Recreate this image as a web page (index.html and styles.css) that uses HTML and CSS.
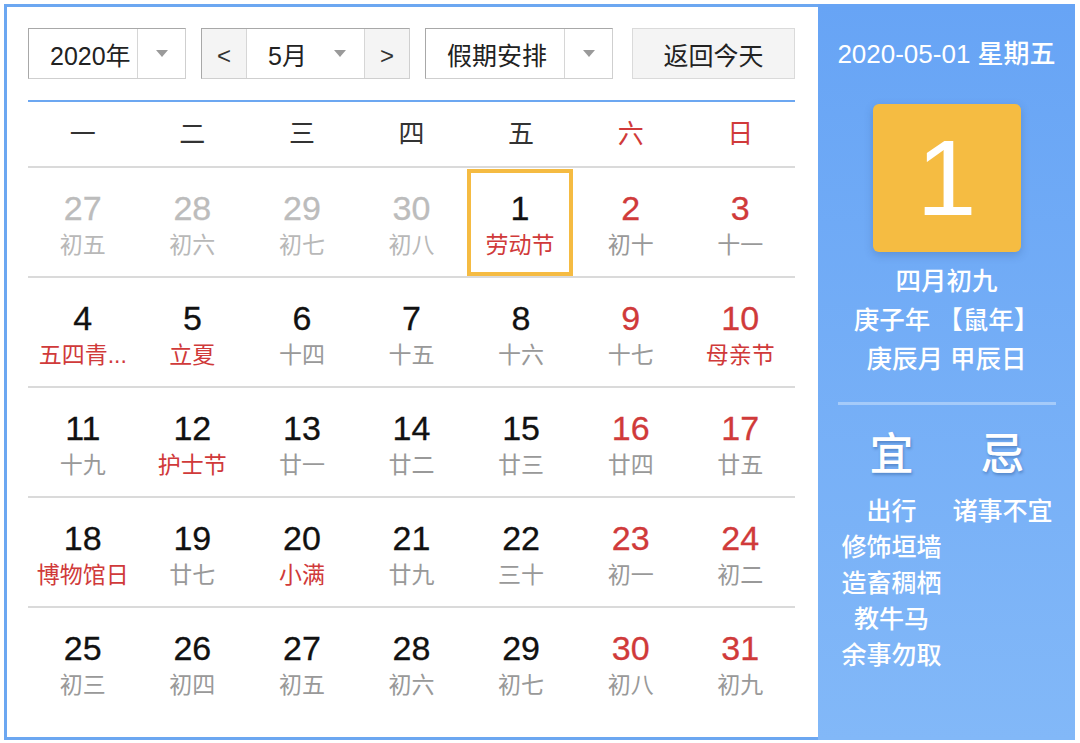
FILE: index.html
```html
<!DOCTYPE html>
<html lang="zh-CN">
<head>
<meta charset="utf-8">
<title>万年历</title>
<link rel="stylesheet" href="styles.css">
</head>
<body>
<div class="frame">
  <section class="cal">
    <div class="toolbar">
      <div class="select year"><span class="sel-text">2020年</span><span class="sel-arrow"><i class="tri"></i></span></div>
      <div class="month-group">
        <div class="nav">&lt;</div>
        <div class="month"><span class="month-text">5月</span><span class="month-arrow"><i class="tri"></i></span></div>
        <div class="nav">&gt;</div>
      </div>
      <div class="select holiday"><span class="sel-text">假期安排</span><span class="sel-arrow"><i class="tri"></i></span></div>
      <div class="today">返回今天</div>
    </div>

    <div class="weekdays">
      <span>一</span><span>二</span><span>三</span><span>四</span><span>五</span><span class="red">六</span><span class="red">日</span>
    </div>

    <div class="weeks">
      <div class="week">
        <div class="day prev"><span class="num">27</span><span class="lunar">初五</span></div>
        <div class="day prev"><span class="num">28</span><span class="lunar">初六</span></div>
        <div class="day prev"><span class="num">29</span><span class="lunar">初七</span></div>
        <div class="day prev"><span class="num">30</span><span class="lunar">初八</span></div>
        <div class="day sel"><span class="num">1</span><span class="lunar fest">劳动节</span></div>
        <div class="day wkend"><span class="num">2</span><span class="lunar">初十</span></div>
        <div class="day wkend"><span class="num">3</span><span class="lunar">十一</span></div>
      </div>
      <div class="week">
        <div class="day"><span class="num">4</span><span class="lunar fest">五四青...</span></div>
        <div class="day"><span class="num">5</span><span class="lunar fest">立夏</span></div>
        <div class="day"><span class="num">6</span><span class="lunar">十四</span></div>
        <div class="day"><span class="num">7</span><span class="lunar">十五</span></div>
        <div class="day"><span class="num">8</span><span class="lunar">十六</span></div>
        <div class="day wkend"><span class="num">9</span><span class="lunar">十七</span></div>
        <div class="day wkend"><span class="num">10</span><span class="lunar fest">母亲节</span></div>
      </div>
      <div class="week">
        <div class="day"><span class="num">11</span><span class="lunar">十九</span></div>
        <div class="day"><span class="num">12</span><span class="lunar fest">护士节</span></div>
        <div class="day"><span class="num">13</span><span class="lunar">廿一</span></div>
        <div class="day"><span class="num">14</span><span class="lunar">廿二</span></div>
        <div class="day"><span class="num">15</span><span class="lunar">廿三</span></div>
        <div class="day wkend"><span class="num">16</span><span class="lunar">廿四</span></div>
        <div class="day wkend"><span class="num">17</span><span class="lunar">廿五</span></div>
      </div>
      <div class="week">
        <div class="day"><span class="num">18</span><span class="lunar fest">博物馆日</span></div>
        <div class="day"><span class="num">19</span><span class="lunar">廿七</span></div>
        <div class="day"><span class="num">20</span><span class="lunar fest">小满</span></div>
        <div class="day"><span class="num">21</span><span class="lunar">廿九</span></div>
        <div class="day"><span class="num">22</span><span class="lunar">三十</span></div>
        <div class="day wkend"><span class="num">23</span><span class="lunar">初一</span></div>
        <div class="day wkend"><span class="num">24</span><span class="lunar">初二</span></div>
      </div>
      <div class="week last">
        <div class="day"><span class="num">25</span><span class="lunar">初三</span></div>
        <div class="day"><span class="num">26</span><span class="lunar">初四</span></div>
        <div class="day"><span class="num">27</span><span class="lunar">初五</span></div>
        <div class="day"><span class="num">28</span><span class="lunar">初六</span></div>
        <div class="day"><span class="num">29</span><span class="lunar">初七</span></div>
        <div class="day wkend"><span class="num">30</span><span class="lunar">初八</span></div>
        <div class="day wkend"><span class="num">31</span><span class="lunar">初九</span></div>
      </div>
    </div>
  </section>

  <aside class="panel">
    <div class="p-date">2020-05-01 星期五</div>
    <div class="big">1</div>
    <div class="p-lunar">
      <div>四月初九</div>
      <div>庚子年 【鼠年】</div>
      <div>庚辰月 甲辰日</div>
    </div>
    <div class="divider"></div>
    <div class="yiji">
      <div class="col">
        <div class="yj-head">宜</div>
        <ul class="yj-list">
          <li>出行</li>
          <li>修饰垣墙</li>
          <li>造畜稠栖</li>
          <li>教牛马</li>
          <li>余事勿取</li>
        </ul>
      </div>
      <div class="col">
        <div class="yj-head">忌</div>
        <ul class="yj-list">
          <li>诸事不宜</li>
        </ul>
      </div>
    </div>
  </aside>
</div>
</body>
</html>
```

FILE: styles.css
```css
* { box-sizing: border-box; }

html, body {
  margin: 0;
  padding: 0;
  background: #ffffff;
}

body {
  font-family: "Liberation Sans", "Noto Sans CJK SC", sans-serif;
  color: #111;
}

.frame {
  display: flex;
  margin: 4px 0 0 4px;
  width: 1071px;
  height: 736px;
}

/* ---------- left calendar ---------- */
.cal {
  width: 814px;
  height: 100%;
  border: 3px solid #6ca7f1;
  border-right: none;
  padding: 21px 23px 0 21px;
  background: #fff;
}

.toolbar {
  display: flex;
  height: 51px;
  font-size: 25px;
  color: #222;
}

.select {
  display: flex;
  height: 51px;
  border: 1px solid #cfcfcf;
  border-top-color: #a8a8a8;
  border-left-color: #a8a8a8;
  background: #fff;
}

.year { width: 158px; }
.holiday { width: 188px; margin-left: 15px; }

.sel-text {
  flex: 1;
  display: flex;
  align-items: center;
  padding-left: 21px;
  border-right: 1px solid #d6d6d6;
}

.sel-arrow {
  width: 47px;
  display: flex;
  align-items: center;
  justify-content: center;
}

.tri {
  display: block;
  width: 0;
  height: 0;
  border-left: 6px solid transparent;
  border-right: 6px solid transparent;
  border-top: 7px solid #9a9a9a;
}

.month-group {
  display: flex;
  width: 209px;
  height: 51px;
  margin-left: 15px;
  border: 1px solid #cfcfcf;
  border-top-color: #a8a8a8;
  border-left-color: #a8a8a8;
}

.nav {
  width: 44px;
  display: flex;
  align-items: center;
  justify-content: center;
  padding-top: 4px;
  background: #f4f4f4;
  color: #333;
  font-size: 24px;
}

.month {
  flex: 1;
  display: flex;
  border-left: 1px solid #d6d6d6;
  border-right: 1px solid #d6d6d6;
  background: #fff;
}

.month-text {
  width: 60px;
  display: flex;
  align-items: center;
  justify-content: flex-end;
}

.month-arrow {
  flex: 1;
  display: flex;
  align-items: center;
  justify-content: center;
  padding-left: 8px;
}

.today {
  width: 163px;
  height: 51px;
  margin-left: 19px;
  display: flex;
  align-items: center;
  justify-content: center;
  background: #f4f4f4;
  border: 1px solid #dadada;
  color: #222;
}

.weekdays {
  display: grid;
  grid-template-columns: repeat(7, 1fr);
  margin-top: 21px;
  border-top: 2px solid #6ca7f1;
  border-bottom: 2px solid #dadada;
  height: 68px;
}

.weekdays span {
  text-align: center;
  line-height: 64px;
  font-size: 26px;
  color: #333;
}

.weekdays .red { color: #d03a3a; }

.week {
  display: grid;
  grid-template-columns: repeat(7, 1fr);
  height: 110px;
  border-bottom: 2px solid #dadada;
}

.week.last { border-bottom: none; }

.day {
  display: flex;
  flex-direction: column;
  align-items: center;
  padding-top: 21px;
}

.num {
  font-size: 34px;
  line-height: 38px;
  color: #111;
  -webkit-text-stroke: 0.3px currentColor;
}

.lunar {
  font-size: 23px;
  line-height: 36px;
  color: #999;
  white-space: nowrap;
}

.lunar.fest { color: #d03a3a; }

.day.prev .num { color: #bcbcbc; }
.day.prev .lunar { color: #b8b8b8; }

.day.wkend .num { color: #d03a3a; }

.day.sel {
  margin: 1px 3px 0 1px;
  border: 4px solid #f5bb42;
  padding-top: 16px;
}

/* ---------- right panel ---------- */
.panel {
  width: 257px;
  height: 100%;
  background: linear-gradient(180deg, #67a4f5 0%, #82b8f8 100%);
  color: #fff;
  text-align: center;
  padding-top: 35px;
  font-weight: 500;
}

.p-date {
  font-size: 26px;
  line-height: 30px;
  white-space: nowrap;
}

.big {
  width: 148px;
  height: 148px;
  margin: 35px auto 0;
  background: #f5bc42;
  border-radius: 6px;
  box-shadow: 0 3px 9px rgba(40, 70, 120, 0.25);
  font-size: 108px;
  line-height: 148px;
  color: #fff;
  font-weight: 400;
}

.p-lunar {
  margin-top: 10px;
  font-size: 25.5px;
  line-height: 39px;
}

.divider {
  height: 3px;
  margin: 23px 19px 0 20px;
  background: rgba(255, 255, 255, 0.35);
}

.yiji {
  display: grid;
  grid-template-columns: 1fr 1fr;
  margin: 22px 17px 0 18px;
}

.yj-head {
  font-size: 44px;
  line-height: 56px;
  text-shadow: 1px 2px 3px rgba(0, 40, 100, 0.3);
}

.yj-list {
  list-style: none;
  margin: 10px 0 0;
  padding: 0;
  font-size: 25px;
  line-height: 36px;
}
```
